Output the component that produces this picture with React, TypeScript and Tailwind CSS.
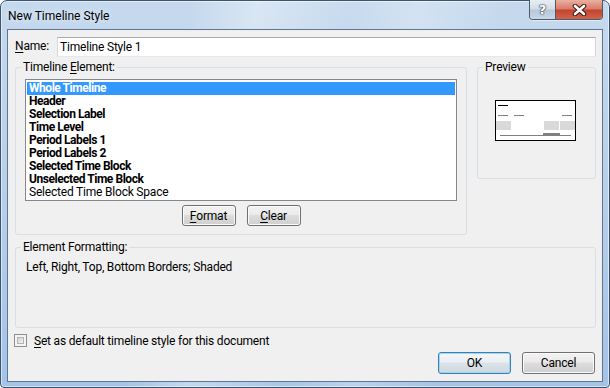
import React from "react";

const FONT = { fontFamily: "Roboto, 'Noto Sans', Arial, sans-serif" };

function WinButton({ children, w, h, primary }: { children: React.ReactNode; w: string; h: string; primary?: boolean }) {
  return (
    <div
      className={`${w} ${h} rounded-[3px] border flex items-center justify-center text-[12px] text-black ${
        primary
          ? "border-[#3c7fb1] shadow-[inset_0_0_0_1px_#9fd6f5] bg-[linear-gradient(180deg,#f3f7fa_0%,#eaeff3_45%,#dbe2e8_50%,#cfd8df_100%)]"
          : "border-[#707070] shadow-[inset_0_0_0_1px_#fbfbfb] bg-[linear-gradient(180deg,#f2f2f2_0%,#ebebeb_45%,#dddddd_50%,#cfcfcf_100%)]"
      }`}
    >
      {children}
    </div>
  );
}

const items: [string, boolean][] = [
  ["Whole Timeline", true],
  ["Header", true],
  ["Selection Label", true],
  ["Time Level", true],
  ["Period Labels 1", true],
  ["Period Labels 2", true],
  ["Selected Time Block", true],
  ["Unselected Time Block", true],
  ["Selected Time Block Space", false],
];

export default function App() {
  return (
    <div className="w-[610px] h-[388px] text-[12px] text-black" style={FONT}>
      <div className="w-full h-full flex flex-col rounded-t-[7px] rounded-b-[4px] border border-[#3d5470] shadow-[inset_0_0_0_1px_rgba(255,255,255,0.55)] bg-[linear-gradient(100deg,rgba(255,255,255,0)_28%,rgba(255,255,255,0.35)_38%,rgba(255,255,255,0.05)_52%,rgba(255,255,255,0.25)_62%,rgba(255,255,255,0)_75%),linear-gradient(180deg,#c5d9ee_0%,#b8cfe9_50%,#a3c3e7_100%)]">
        {/* Title bar */}
        <div className="h-[28px] flex items-start pl-[7px] pr-[6px]">
          <div className="flex-1 h-[29px] flex items-center text-[12px] text-black [text-shadow:0_0_6px_rgba(255,255,255,0.9)]">
            New Timeline Style
          </div>
          <div className="flex h-[20px] -mt-[1px] rounded-b-[4px] border border-t-0 border-[#4a5b6e] overflow-hidden shadow-[0_1px_0_rgba(255,255,255,0.5)]">
            <div className="w-[26px] h-full flex items-center justify-center border-r border-[#4a5b6e] bg-[linear-gradient(180deg,#e7edf3_0%,#d3dde8_48%,#b7c7d9_52%,#c9d7e6_100%)]">
              <span className="font-bold text-[13px] leading-[13px] text-white [text-shadow:0_0_1px_#2d3a48,0_0_1px_#2d3a48,0_0_2px_#2d3a48]" style={{ fontFamily: "'DejaVu Sans', sans-serif" }}>
                ?
              </span>
            </div>
            <div className="w-[46px] h-full flex items-center justify-center bg-[linear-gradient(180deg,#eab0a3_0%,#d97a66_48%,#c2432d_52%,#d0634b_100%)]">
              <svg width="15" height="12" viewBox="0 0 15 12">
                <path d="M3 2 L12 10 M12 2 L3 10" stroke="#43160f" strokeWidth="4.6" strokeLinecap="round" fill="none" />
                <path d="M3 2 L12 10 M12 2 L3 10" stroke="#ffffff" strokeWidth="2.6" strokeLinecap="round" fill="none" />
              </svg>
            </div>
          </div>
        </div>

        {/* Client area */}
        <div className="flex-1 mx-[6px] mb-[5px] border border-[#5f7690] bg-[#f0f0f0] flex flex-col pl-[7px] pr-[6px] tracking-[-0.2px]">
          {/* Name row */}
          <div className="mt-[7px] h-[20px] flex items-center">
            <div className="w-[42px] leading-[14px] -mt-[3px]">
              <span className="underline underline-offset-[2px]">N</span>ame:
            </div>
            <div className="flex-1 h-[20px] bg-white border border-[#abadb3] border-b-[#e3e9ef] border-x-[#d5d9df] flex items-center pl-[2px] leading-[14px]">
              Timeline Style 1
            </div>
          </div>

          {/* Groups row */}
          <div className="mt-[3px] flex gap-[10px]">
            <fieldset className="w-[452px] h-[175px] border border-[#d5dfe5] rounded-[3px] min-w-0 flex flex-col">
              <legend className="ml-[5px] px-[2px] leading-[14px]">
                Timeline <span className="underline underline-offset-[2px]">E</span>lement:
              </legend>
              <div className="mx-[9px] mt-[5px] h-[122px] border border-[#828790] bg-white p-[1px] pt-[2px]">
                {items.map(([t, b], i) => (
                  <div
                    key={t}
                    className={`h-[13px] leading-[13px] pl-[2px] whitespace-nowrap ${i === 0 ? "bg-[#3399ff] text-white" : "text-black"} ${b ? "font-bold tracking-[-0.45px]" : "font-normal"}`}
                  >
                    {t}
                  </div>
                ))}
              </div>
              <div className="mt-[4px] flex justify-center gap-[11px]">
                <WinButton w="w-[54px]" h="h-[21px]">
                  <span className="underline underline-offset-[2px]">F</span>ormat
                </WinButton>
                <WinButton w="w-[54px]" h="h-[21px]">
                  <span className="underline underline-offset-[2px]">C</span>lear
                </WinButton>
              </div>
            </fieldset>

            <fieldset className="w-[119px] h-[119px] border border-[#d5dfe5] rounded-[3px] min-w-0 flex flex-col items-center">
              <legend className="ml-[5px] px-[2px] leading-[14px]">Preview</legend>
              <div className="mt-[26px] -ml-[2px]">
                <svg width="81" height="41" viewBox="0 0 81 41">
                  <rect x="0" y="0" width="81" height="41" fill="#ffffff" />
                  <rect x="1" y="21" width="15" height="9" fill="#d9d9d9" />
                  <rect x="49" y="21" width="15" height="9" fill="#d9d9d9" />
                  <rect x="65" y="21" width="15" height="9" fill="#d9d9d9" />
                  <rect x="3" y="5" width="10" height="1" fill="#000000" />
                  <rect x="3" y="15" width="10" height="1" fill="#808080" />
                  <rect x="19" y="15" width="10" height="1" fill="#808080" />
                  <rect x="67" y="15" width="10" height="1" fill="#808080" />
                  <rect x="5" y="35" width="71" height="1" fill="#808080" />
                  <rect x="48" y="33" width="17" height="3" fill="#808080" />
                  <rect x="0.5" y="0.5" width="80" height="40" fill="none" stroke="#000000" strokeWidth="1" />
                </svg>
              </div>
            </fieldset>
          </div>

          {/* Element formatting */}
          <fieldset className="mt-[5px] h-[88px] border border-[#d5dfe5] rounded-[3px] min-w-0">
            <legend className="ml-[5px] px-[2px] leading-[14px]">Element Formatting:</legend>
            <div className="mt-[5px] pl-[10px] leading-[16px]">Left, Right, Top, Bottom Borders; Shaded</div>
          </fieldset>

          {/* Checkbox */}
          <div className="mt-[6px] h-[13px] flex items-center">
            <div className="ml-[-1px] w-[13px] h-[13px] border border-[#8e8f8f] bg-[#f4f4f4] p-[2px]">
              <div className="w-full h-full border border-[#b0b4b9] bg-[linear-gradient(135deg,#cfd2d6_0%,#f4f4f4_100%)]" />
            </div>
            <div className="ml-[7px] leading-[14px]">
              <span className="underline underline-offset-[2px]">S</span>et as default timeline style for this document
            </div>
          </div>

          {/* Bottom buttons */}
          <div className="mt-[5px] flex justify-end gap-[11px] mr-[1px]">
            <WinButton w="w-[73px]" h="h-[22px]" primary>
              OK
            </WinButton>
            <WinButton w="w-[73px]" h="h-[22px]">
              Cancel
            </WinButton>
          </div>
        </div>
      </div>
    </div>
  );
}
